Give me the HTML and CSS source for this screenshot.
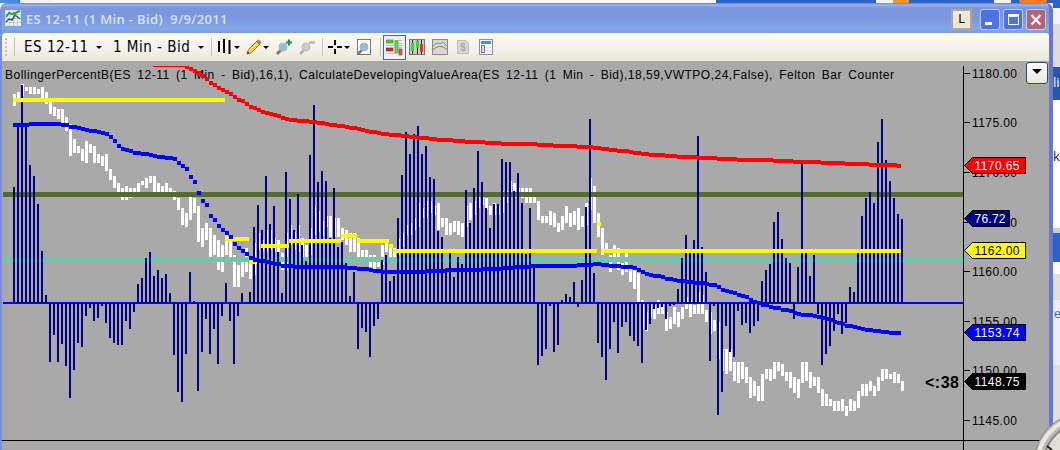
FILE: index.html
```
<!DOCTYPE html>
<html lang="en">
<head>
    <meta charset="UTF-8">
    <title>ES 12-11 (1 Min - Bid)</title>
    <link rel="stylesheet" href="styles.css">
</head>
<body>
    <div class="desktop">
        <div class="behind-top"><span class="tab"></span><span class="orange"></span><span class="tab"></span><span class="fox"></span></div>
        <div class="window">
            <div class="titlebar">
                <svg class="app-icon" width="16" height="16" viewBox="0 0 16 16">
                    <rect x="0.5" y="0.5" width="15" height="15" fill="#f4f6f8" stroke="#dfe6f2"/>
                    <path d="M0 4.500h16M0 8.500h16M0 12.500h16M4.500 0v16M8.500 0v16M12.500 0v16" stroke="#c4cad4"/>
                    <path d="M1 7l3-4 3 1 3-1 5-2" fill="none" stroke="#2aa03a" stroke-width="2"/>
                    <path d="M1 12l3-3 3 1 3-5 5 4" fill="none" stroke="#205c70" stroke-width="1.500"/>
                </svg>
                <span class="title">ES 12-11 (1 Min - Bid)&nbsp; 9/9/2011</span>
                <span class="link-btn">L</span>
                <svg class="win-btn" width="21" height="21" viewBox="0 0 21 21"><rect class="wb" x="0.500" y="0.500" width="19" height="20" rx="2.500"/><rect x="5" y="13" width="7" height="3" fill="#fff"/></svg>
                <svg class="win-btn" width="21" height="21" viewBox="0 0 21 21"><rect class="wb" x="0.500" y="0.500" width="19" height="20" rx="2.500"/><path d="M5 6.500h11M5.500 6v9.500h10V6" fill="none" stroke="#fff"/><rect x="5" y="5" width="11" height="3" fill="#fff"/></svg>
                <svg class="win-btn" width="21" height="21" viewBox="0 0 21 21"><rect class="wb close" x="0.500" y="0.500" width="19" height="20" rx="2.500"/><path d="M5.500 6l9 9.500M14.500 6l-9 9.500" stroke="#fff" stroke-width="2.200"/></svg>
            </div>
            <div class="toolbar">
                <span class="grip"></span>
                <span class="sep s1"></span>
                <span class="label instrument">ES 12-11</span><span class="caret c1"></span>
                <span class="label interval">1 Min - Bid</span><span class="caret c2"></span>
                <span class="sep s2"></span>
                <svg class="tool bars" width="13" height="16" viewBox="0 0 13 16"><path d="M1 2v11M6 0v14M11.500 1v14" stroke="#000" stroke-width="2"/></svg>
                <span class="caret c3"></span>
                <svg class="tool pencil" width="16" height="16" viewBox="0 0 16 16"><path d="M1 15l1.500-4.500L11 2l3 3-8.500 8.500z" fill="#f8d430" stroke="#9a7420"/><path d="M3 12l8.500-8.500" stroke="#fff08a"/><path d="M10.500 2.500L12.500.800l2.700 2.700-1.700 2z" fill="#d86860" stroke="#a05050" stroke-width=".6"/><path d="M1 15l.8-2.500 1.700 1.700z" fill="#333"/></svg>
                <span class="caret c4"></span>
                <svg class="tool zoom" width="16" height="16" viewBox="0 0 16 16"><path d="M1 15l4-4" stroke="#777" stroke-width="2.600"/><circle cx="7" cy="8" r="4" fill="#8fc0e4" stroke="#a8b4bc"/><path d="M10 3.500h6M13 .5v6" stroke="#0aa02c" stroke-width="2"/></svg>
                <svg class="tool zoom" width="16" height="16" viewBox="0 0 16 16"><path d="M1 15l4-4" stroke="#b2b2b2" stroke-width="2.600"/><circle cx="7" cy="8" r="4" fill="#ccc" stroke="#bdbdbd"/><path d="M10 3.500h6" stroke="#aaa" stroke-width="2"/></svg>
                <span class="sep s3"></span>
                <svg class="tool cross" width="14" height="14" viewBox="0 0 14 14"><path d="M0 7h5M9 7h5M7 0v5M7 9v5" stroke="#000" stroke-width="2"/></svg>
                <span class="caret c5"></span>
                <svg class="tool find" width="15" height="17" viewBox="0 0 15 17"><rect x=".5" y=".5" width="13" height="15" fill="#fff" stroke="#777"/><path d="M1 15l4-4" stroke="#777" stroke-width="2.500"/><circle cx="7" cy="8" r="4" fill="#8fc0e4" stroke="#a8b4bc"/></svg>
                <span class="sep s4"></span>
                <span class="active">
                    <svg width="17" height="17" viewBox="0 0 17 17"><path d="M8 1.500h8M0 6.500h16M8 8.500h8M0 14.500h9M8 4.500h8" stroke="#c4c2b8"/><rect x="0" y="1" width="7" height="3" fill="#40d820" stroke="#349020" stroke-width=".6"/><rect x="0" y="9" width="7" height="3" fill="#e82020" stroke="#8a2020" stroke-width=".6"/><rect x="9" y="2" width="3" height="12" fill="#70d850" stroke="#48943c" stroke-width=".7"/><rect x="13" y="10" width="3" height="6" fill="#f05050" stroke="#a03838" stroke-width=".7"/></svg>
                </span>
                <svg class="tool candles" width="16" height="16" viewBox="0 0 16 16"><rect x=".5" y=".5" width="15" height="15" fill="#c8c8c8" stroke="#777"/><path d="M3.500 1v14M8.500 1v14M12.500 1v14" stroke="#333"/><rect x="2" y="4" width="3" height="8" fill="#38d828"/><rect x="7" y="2" width="3" height="7" fill="#38d828"/><rect x="11" y="5" width="3" height="8" fill="#e83030"/></svg>
                <svg class="tool lines" width="16" height="16" viewBox="0 0 16 16"><rect x=".5" y=".5" width="15" height="15" fill="#d6d6d6" stroke="#888"/><path d="M1 7l4-3 3 1 3-2 4 4" fill="none" stroke="#50b878"/><path d="M1 10.500l3-2 3-1 3 0 2 1 3 2" fill="none" stroke="#e06868"/></svg>
                <svg class="tool money" width="12" height="14" viewBox="0 0 12 14"><path d="M.5 .5h8l3 3v10h-11z" fill="#d8d8d4" stroke="#bbb"/><text x="6" y="11" text-anchor="middle" class="dollar">$</text></svg>
                <svg class="tool panel" width="14" height="16" viewBox="0 0 14 16"><rect x=".5" y=".5" width="13" height="15" fill="#fff" stroke="#8a90a0"/><rect x="2" y="2" width="10" height="3" fill="#4098d8"/><rect x="2.500" y="6.500" width="3" height="7" fill="#e0d0ff" stroke="#9060e0"/><path d="M7 8.500h5M7 11.500h5" stroke="#ddd"/></svg>
            </div>
            <div class="chart-area">
                <svg id="chart" width="1047" height="389" viewBox="2 61 1047 389"></svg>
                <button class="menu-btn" type="button"></button>
            </div>
        </div>
        <div class="behind-right">
            <div class="r1"></div><div class="r2"></div><div class="r3">li</div><div class="r4">k</div>
            <div class="r5"></div><div class="r6"></div><div class="r7">te</div><div class="r8"></div><div class="r9"></div>
        </div>
        <svg class="clock" width="30" height="36" viewBox="1030 414 30 36">
            <circle cx="1084" cy="463" r="50" fill="#bdb9b3" stroke="#8b8780"/>
            <circle cx="1084" cy="463" r="46" fill="none" stroke="#ebe8e3" stroke-width="4"/>
            <circle cx="1084" cy="463" r="40" fill="#e2dfd8" stroke="#8c8880" stroke-width="2"/>
            <path d="M1047 446l5 4" stroke="#222" stroke-width="2"/>
        </svg>
    </div>

    <script>
const svg = document.getElementById("chart");
const X0 = 13;
const STEP = 4;
const BASE = 303;

// histogram: end y of every bar, measured from the zero line
const percentB = [
    187,126,85,126,165,176,204,251,295,362,335,362,344,366,398,370,343,347,316,308,
    321,318,306,323,338,343,345,345,321,329,312,284,278,258,252,276,270,278,274,293,
    355,392,402,354,272,301,391,352,319,354,329,364,316,283,321,364,316,293,304,292,
    227,205,230,176,224,206,252,293,172,199,230,194,245,261,155,105,182,171,181,238,
    188,247,242,263,296,272,349,328,332,357,326,319,260,255,281,276,218,175,132,154,
    134,126,154,146,177,179,231,237,270,253,277,257,264,190,223,188,151,182,208,228,
    204,204,159,162,162,191,173,203,254,208,267,365,356,349,306,352,345,300,294,297,
    282,307,280,207,119,273,343,357,380,349,322,353,327,322,336,341,346,363,330,324,
    309,308,307,319,306,305,289,258,235,252,240,136,247,272,361,306,415,392,326,352,
    357,311,325,323,333,326,321,281,270,264,222,212,239,258,263,319,267,163,252,276,
    255,314,365,354,346,331,314,334,323,287,292,252,216,198,192,203,142,119,160,181,
    198,214,219
];

// high / low of every price bar
const price = [
    [94,106],[92,100],[84,96],[87,91],[87,94],[87,94],[89,94],[87,99],[92,104],[102,114],
    [107,116],[109,119],[109,125],[117,131],[124,156],[139,153],[146,153],[149,161],[141,163],[144,153],
    [146,163],[154,163],[156,166],[154,171],[169,180],[176,188],[183,192],[188,200],[186,200],[188,198],
    [188,192],[183,192],[181,185],[178,188],[176,183],[176,192],[183,192],[186,192],[183,192],[188,193],
    [191,200],[198,210],[208,225],[213,227],[197,220],[198,213],[206,242],[228,247],[223,240],[228,257],
    [235,255],[240,270],[245,272],[235,255],[240,257],[255,287],[265,287],[262,277],[248,272],[260,279],
    [243,275],[233,250],[240,252],[230,252],[230,250],[238,252],[240,252],[253,270],[233,270],[225,245],
    [232,250],[225,252],[238,257],[245,257],[228,255],[206,235],[211,232],[221,236],[216,227],[216,237],
    [218,237],[218,237],[228,240],[230,245],[233,252],[233,252],[238,257],[250,257],[250,257],[255,267],
    [255,269],[257,267],[245,265],[243,252],[245,257],[248,257],[238,255],[233,247],[225,235],[223,235],
    [218,230],[203,227],[208,218],[201,218],[201,213],[206,215],[203,230],[218,227],[218,235],[223,235],
    [221,232],[221,235],[223,237],[206,227],[203,220],[201,215],[197,208],[197,205],[198,210],[206,215],
    [203,215],[206,215],[191,213],[191,203],[181,193],[183,198],[188,195],[188,198],[188,203],[188,203],
    [193,203],[201,220],[216,223],[216,223],[211,225],[213,227],[223,232],[216,230],[206,223],[213,227],
    [211,225],[208,230],[216,227],[203,225],[178,210],[186,223],[213,237],[228,255],[243,252],[255,272],
    [245,257],[248,270],[263,275],[253,272],[267,282],[268,289],[273,302],[300,329],[312,331],[303,317],
    [305,319],[300,314],[303,314],[312,331],[317,329],[307,324],[312,327],[307,319],[297,309],[300,317],
    [305,314],[292,314],[295,314],[310,322],[312,334],[320,331],[322,359],[349,371],[349,374],[349,371],
    [362,381],[362,383],[362,379],[367,383],[377,398],[381,396],[386,401],[374,401],[369,379],[369,381],
    [362,379],[362,371],[364,376],[372,381],[372,388],[377,393],[379,398],[362,383],[362,381],[372,388],
    [377,386],[377,393],[389,406],[394,406],[399,406],[401,411],[401,411],[399,411],[406,416],[399,411],
    [401,411],[391,408],[384,396],[384,396],[381,391],[386,396],[377,391],[369,381],[369,379],[374,379],
    [372,383],[374,383],[381,391]
];

// stepped lines: [first bar, y], each level holds until the next entry
const vwap = [
    [0,123],[4,122],[12,123],[14,125],[16,126],[17,127],[18,128],[19,129],[21,130],[22,131],[23,132],
    [24,135],[25,139],[26,144],[27,147],[28,148],[29,149],[30,151],[32,152],[34,153],[35,154],[36,155],
    [38,156],[40,157],[41,161],[42,164],[43,167],[44,175],[45,180],[46,191],[47,199],[48,203],[49,214],
    [50,218],[51,224],[52,228],[53,231],[54,235],[55,242],[56,246],[57,249],[58,252],[59,256],[60,258],
    [61,259],[63,260],[64,261],[65,262],[67,264],[70,265],[83,266],[86,267],[89,268],[90,269],[92,270],
    [103,269],[108,268],[117,267],[122,266],[125,265],[129,264],[141,263],[145,262],[147,263],[149,264],
    [152,265],[155,266],[156,268],[157,270],[158,272],[159,273],[160,274],[162,275],[163,277],[165,278],
    [166,279],[168,280],[170,281],[173,282],[174,283],[176,285],[177,288],[178,289],[179,290],[180,291],
    [181,293],[182,294],[183,295],[184,298],[185,300],[186,301],[187,303],[189,305],[190,306],[192,308],
    [194,309],[195,311],[196,312],[197,313],[200,314],[201,315],[202,316],[203,317],[204,318],[205,320],
    [206,321],[207,322],[208,324],[210,325],[211,326],[212,327],[213,328],[215,329],[217,330],[219,331],[222]
];
const upper = [
    [35,63],[43,65],[44,67],[45,69],[46,71],[47,74],[48,77],[49,81],[50,83],[51,86],[52,88],[53,90],
    [54,92],[55,95],[56,98],[57,99],[58,102],[59,105],[60,106],[61,108],[62,110],[63,111],[64,112],
    [65,113],[66,114],[67,116],[68,117],[69,118],[71,119],[74,120],[76,121],[78,122],[79,123],[81,124],
    [83,125],[84,126],[86,127],[87,128],[88,129],[89,130],[91,131],[92,132],[94,133],[97,134],[99,135],
    [101,136],[104,137],[106,138],[110,139],[113,140],[118,141],[122,142],[131,143],[135,144],[141,145],
    [145,146],[147,147],[149,148],[151,149],[154,150],[155,151],[157,152],[159,153],[163,154],[166,155],
    [171,156],[176,157],[181,158],[190,159],[195,160],[202,161],[208,162],[214,163],[221,164],[222]
];
const poc = [
    [0,98],[53,237],[59,260],[61,null],[62,244],[69,239],[82,234],[86,239],[94,244],[95,249],
    [146,222],[147,249],[222]
];

let out = "";
const rect = (x, y, w, h, cls) => { out += `<rect x="${x}" y="${y}" width="${w}" height="${h}" class="${cls}"/>`; };
const text = (x, y, len, cls, str) => { out += `<text x="${x}" y="${y}" textLength="${len}" class="${cls}">${str}</text>`; };

function steps(levels, cls) {
    for (let k = 0; k < levels.length - 1; k++) {
        const [i, y] = levels[k];
        if (y === null) continue;
        const top = Math.max(y, 66);
        rect(X0 + i * STEP, top, (levels[k + 1][0] - i) * STEP, y + 4 - top, cls);
    }
}

text(5, 79, 889, "caption", "BollingerPercentB(ES 12-11 (1 Min - Bid),16,1), CalculateDevelopingValueArea(ES 12-11 (1 Min - Bid),18,59,VWTPO,24,False), Felton Bar Counter");

price.forEach(([hi, lo], i) => rect(X0 + i * STEP, hi, 3, lo - hi, "price"));
rect(3, 192, 960, 5, "olive");
rect(3, 257, 960, 5, "teal");
rect(3, 302, 960, 2, "blue");
percentB.forEach((y, i) => rect(X0 + i * STEP, Math.min(y, BASE), 2, Math.abs(y - BASE), "navy"));
steps(poc, "yellow");
steps(vwap, "blue");
steps(upper, "red");

// axes
rect(963, 66, 1, 384, "black");
rect(2, 440, 1047, 1, "black");
[[73, "1180.00"], [122, "1175.00"], [172, "1170.00"], [222, "1165.00"], [271, "1160.00"], [321, "1155.00"], [370, "1150.00"], [420, "1145.00"]]
    .forEach(([y, label]) => {
        rect(964, y, 6, 1, "black");
        text(972, y + 5, 45, "tick", label);
    });

// price markers
[[157, 1025.5, "red", "#fff", "1170.65"], [210, 1009.5, "navy", "#fff", "76.72"], [242, 1025.5, "yellow", "#000", "1162.00"],
 [324, 1025.5, "blue", "#fff", "1153.74"], [373, 1025.5, "black", "#fff", "1148.75"]]
    .forEach(([y, right, cls, ink, label]) => {
        out += `<path d="M964.5 ${y + 8.5}L972.5 ${y + 0.5}H${right}V${y + 16.5}H972.5Z" class="marker ${cls}"/>`;
        out += `<text x="974.5" y="${y + 13}" textLength="${label.length > 5 ? 45 : 31}" class="tick" fill="${ink}">${label}</text>`;
    });
text(925, 388, 34, "counter", "&lt;:38");
svg.innerHTML = out;
    </script>
</body>
</html>
```
FILE: styles.css
```
body {
    margin: 0;
    overflow: hidden;
    font-family: "Liberation Sans", Arial, sans-serif;
}

.desktop {
    position: relative;
    display: grid;
    grid-template: 3px 447px / 1053px 7px;
    width: 1060px;
    height: 450px;
    background: #fff;
}

.behind-top {
    grid-column: 1 / 3;
    display: flex;
    background: linear-gradient(90deg, #4d8be8 0 18px, #3a72dc 18px 20px, #dfe3ea 20px 22px, #f4f4f4 22px 53px, #fff 53px 716px, #2c62cc 716px);
}

.tab { width: 17px; background: #f2f2f2; }
.tab:first-child { margin-left: 876px; }
.orange { width: 16px; margin-right: 85px; background: #f0952c; }
.fox { width: 28px; margin-left: 8px; background: #f08020; border-radius: 0 0 12px 12px; }

.window {
    box-sizing: border-box;
    display: flex;
    flex-direction: column;
    width: 1053px;
    border-left: 2px solid #7890da;
    border-right: 4px solid #6878d0;
    border-radius: 7px 7px 0 0;
    background: #7b96e0;
    overflow: hidden;
}

.titlebar {
    display: flex;
    align-items: center;
    flex: 0 0 30px;
    padding-left: 3px;
    background: linear-gradient(#6a84cc 0, #9ab4f0 2px, #7b96df 5px, #7b97e0 14px, #83a8ea 26px, #7d9ce0);
}

.title {
    flex: 1;
    margin: 2px 0 0 5px;
    color: #d8e4f8;
    font: 600 13px "Open Sans", sans-serif;
    letter-spacing: 0.35px;
}

.link-btn {
    box-sizing: border-box;
    width: 21px;
    height: 21px;
    margin-right: 8px;
    margin-top: 3px;
    border: 2px solid #aca899;
    background: #ece9d8;
    font: 13px/16px "DejaVu Sans Condensed", sans-serif;
    text-align: center;
}

.win-btn { margin: 3px 2px 0 0; }
.wb { fill: #4a74e4; stroke: #c0d0f4; }
.wb.close { fill: #b46476; }

.toolbar {
    display: flex;
    align-items: center;
    flex: 0 0 28px;
    padding-left: 3px;
    border-radius: 3px 3px 0 0;
    background: linear-gradient(#fcfbf8, #f4f2e8 60%, #ebe8d7);
}

.toolbar > * { flex: none; }
.grip { width: 2px; height: 18px; background: repeating-linear-gradient(#c4c0b0 0 2px, transparent 2px 4px); }
.sep { width: 1px; height: 18px; background: #c6c3b4; }
.label { font: 15px "DejaVu Sans Condensed", sans-serif; letter-spacing: 0.5px; white-space: nowrap; }
.instrument { width: 64px; margin-left: 9px; }
.interval { width: 78px; margin-left: 11px; }

.caret {
    width: 0;
    height: 0;
    border: 3px solid transparent;
    border-top-color: #000;
    border-bottom: 0;
}

.s1 { margin-left: 7px; }
.c1 { margin-left: 8px; }
.c2 { margin-left: 7px; }
.s2 { margin-left: 7px; }
.bars { margin-left: 6px; }
.c3 { margin-left: 3px; }
.pencil { margin-left: 6px; }
.c4 { margin-left: 1px; }
.zoom { margin-left: 7px; }
.s3 { margin-left: 7px; }
.cross { margin-left: 5px; }
.c5 { margin-left: 2px; }
.find { margin-left: 7px; }
.s4 { margin-left: 8px; }

.active {
    box-sizing: border-box;
    display: flex;
    align-items: center;
    justify-content: center;
    width: 23px;
    height: 25px;
    margin-left: 2px;
    border: 1px solid #316ac5;
    background: #eef1f5;
}

.candles { margin-left: 3px; }
.lines { margin-left: 7px; }
.money { margin-left: 9px; }
.panel { margin-left: 10px; }
.dollar { font: bold 10px "Liberation Sans", sans-serif; fill: #aaa; }

.chart-area {
    position: relative;
    flex: 1;
    background: #a9a9a9;
}

#chart { display: block; shape-rendering: crispEdges; }
.caption, .tick { font: 12px "Liberation Sans", Arial, sans-serif; }
.caption { word-spacing: 2.5px; }
.counter { font: bold 16px "Liberation Sans", Arial, sans-serif; }
.marker { stroke: #000; shape-rendering: auto; }
.price { fill: #fff; }
.navy { fill: #000080; }
.olive { fill: #556b2f; }
.teal { fill: #66cdaa; }
.blue { fill: #0000ff; }
.red { fill: #ff0000; }
.yellow { fill: #ffff00; }
.black { fill: #000; }

.menu-btn {
    position: absolute;
    top: 1px;
    right: 1px;
    width: 22px;
    height: 22px;
    padding: 0;
    border: 1px solid #1c5180;
    border-radius: 3px;
    background: linear-gradient(#fff, #ece9d8);
}

.menu-btn::before {
    content: "";
    display: block;
    width: 0;
    margin: -3px auto 0;
    border: 5px solid transparent;
    border-top-color: #000;
    border-bottom: 0;
}

.behind-right {
    display: flex;
    flex-direction: column;
    overflow: hidden;
    font: 13px "Open Sans", sans-serif;
    background: #fff;
}

.r1 { flex: 0 0 21px; background: linear-gradient(#2c62cc 5px, #f4f4f6 5px); }
.r2 { flex: 0 0 43px; background: #dcdcdc; }
.r3 { flex: 0 0 33px; background: #2a55a8; color: #fff; line-height: 31px; }
.r4 { flex: 0 0 128px; line-height: 112px; color: #222; }
.r5 { flex: 0 0 5px; background: #ccc; }
.r6 { flex: 0 0 29px; background: #2f62c4; }
.r7 { flex: 0 0 63px; line-height: 103px; text-indent: -4px; color: #4a6cb4; background: linear-gradient(#fff 12px, #e0e0e0 12px 38px, #e8edf8 38px); }
.r8 { flex: 0 0 90px; background: #e0e0e0; }
.r9 { flex: 1; background: #0c3ca0; }

.clock {
    position: absolute;
    right: 0;
    bottom: 0;
}
```
